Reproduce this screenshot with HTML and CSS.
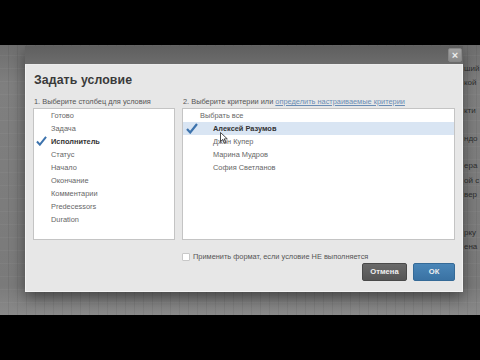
FILE: index.html
```html
<!DOCTYPE html>
<html lang="ru">
<head>
<meta charset="utf-8">
<title>Задать условие</title>
<link rel="stylesheet" href="styles.css">
</head>
<body>
<div class="screen">
  <div class="letterbox"></div>
  <div class="stage">
    <div class="page">
      <div class="prow r1"><span>ший</span></div>
      <div class="prow r2"><span>кой</span></div>
      <div class="prow r3"><span>кти</span></div>
      <div class="prow r4"><span>ндо</span></div>
      <div class="prow r5"><span>ера</span></div>
      <div class="prow r6"><span>ой с</span></div>
      <div class="prow r7"><span>вер</span></div>
      <div class="prow r8"><span>рку</span></div>
      <div class="prow r9"><span>ена</span></div>
    </div>
    <div class="dialog">
      <div class="dlg-head">
        <button class="close" type="button">×</button>
      </div>
      <div class="dlg-body">
        <h1 class="title">Задать условие</h1>
        <div class="cols">
          <div class="col col-left">
            <div class="label">1. Выберите столбец для условия</div>
            <ul class="list">
              <li class="item">Готово</li>
              <li class="item">Задача</li>
              <li class="item selected"><svg class="check" viewBox="0 0 12 11"><path d="M1 6 L4.2 9.5 L11 1" fill="none" stroke="#3d73ad" stroke-width="2.2"/></svg>Исполнитель</li>
              <li class="item">Статус</li>
              <li class="item">Начало</li>
              <li class="item">Окончание</li>
              <li class="item">Комментарии</li>
              <li class="item">Predecessors</li>
              <li class="item">Duration</li>
            </ul>
          </div>
          <div class="col col-right">
            <div class="label">2. Выберите критерии или <a class="link" href="#">определить настраиваемые критерии</a></div>
            <ul class="list list-right">
              <li class="item all">Выбрать все</li>
              <li class="item selected hl"><svg class="check" viewBox="0 0 12 11"><path d="M1 6 L4.2 9.5 L11 1" fill="none" stroke="#3d73ad" stroke-width="2.2"/></svg>Алексей Разумов</li>
              <li class="item">Джон Купер</li>
              <li class="item">Марина Мудров</li>
              <li class="item">София Светланов</li>
            </ul>
            <label class="neg"><span class="box"></span>Применить формат, если условие НЕ выполняется</label>
          </div>
        </div>
        <div class="actions">
          <button class="btn cancel" type="button">Отмена</button>
          <button class="btn ok" type="button">ОК</button>
        </div>
      </div>
    </div>
    <svg class="cursor" viewBox="0 0 8 12"><path d="M0.5 0.5 L0.5 9.5 L2.8 7.4 L4.4 11 L5.8 10.4 L4.2 6.9 L7.3 6.9 Z" fill="#fff" stroke="#222" stroke-width="0.8"/></svg>
  </div>
  <div class="letterbox"></div>
</div>
</body>
</html>
```

FILE: styles.css
```css
* { box-sizing: border-box; }
html, body { margin: 0; padding: 0; background: #000; }
body { font-family: "Liberation Sans", Arial, sans-serif; }

.screen { width: 480px; height: 360px; display: flex; flex-direction: column; overflow: hidden; }
.letterbox { height: 45px; background: #000; flex: none; }
.stage {
  position: relative;
  height: 270px;
  flex: none;
  background-color: #7c7c7c;
  background-image:
    repeating-linear-gradient(90deg, transparent 0 8px, rgba(0,0,0,0.06) 8px 9px),
    repeating-linear-gradient(0deg, transparent 0 12px, rgba(255,255,255,0.04) 12px 13px),
    linear-gradient(180deg, #6e6e6e 0, #7f7f7f 40px, #7a7a7a 240px, #8a8a8a 270px);
  overflow: hidden;
}

.page { display: flex; flex-direction: column; padding-top: 17px; }
.prow { height: 14px; display: flex; justify-content: flex-end; font-size: 8px; line-height: 14px; color: #2e2e2e; }
.prow span { width: 16px; white-space: nowrap; }
.r2 { margin-bottom: 14px; }
.r3 { margin-bottom: 14px; }
.r4 { margin-bottom: 13px; }
.r5 { margin-bottom: 1px; }
.r7 { margin-bottom: 24px; }

.dialog {
  position: absolute;
  left: 25px;
  top: 1px;
  width: 438px;
  display: flex;
  flex-direction: column;
  box-shadow: 0 6px 14px rgba(0,0,0,0.45);
}
.dlg-head {
  height: 18px;
  background: linear-gradient(180deg, #5f5f5f, #6c6c6c);
  display: flex;
  justify-content: flex-end;
  align-items: flex-start;
  padding: 2px 1px 0 0;
}
.close {
  width: 14px; height: 14px;
  margin: 0; padding: 0;
  border: 1px solid #878787;
  border-radius: 2px;
  background: linear-gradient(180deg, #a2a2a2, #8a8a8a);
  color: #ececec;
  font: bold 11px/12px "Liberation Sans", Arial, sans-serif;
  text-align: center;
}
.dlg-body {
  height: 228px;
  background: #e7e7e7;
  border: 1px solid #f3f3f3;
  border-top-color: #ececec;
  padding: 7px 7px 0 7px;
  display: flex;
  flex-direction: column;
}
.title {
  margin: 0 0 0 1px;
  font-size: 12.3px;
  line-height: 16px;
  font-weight: bold;
  color: #3a3a3a;
  letter-spacing: 0.1px;
}
.cols { display: flex; gap: 7px; margin-top: 9px; }
.col { display: flex; flex-direction: column; }
.col-left { width: 142px; }
.col-right { flex: 1; }
.label { font-size: 7.4px; line-height: 10px; color: #555; white-space: nowrap; padding-left: 1px; height: 11px; }
.link { color: #6a8db5; text-decoration: underline; }
.list {
  list-style: none;
  margin: 0;
  padding: 0;
  height: 132px;
  background: #fff;
  border: 1px solid #c4c4c4;
}
.item {
  position: relative;
  height: 13px;
  line-height: 13px;
  font-size: 7.4px;
  color: #666;
  padding-left: 17px;
  white-space: nowrap;
}
.item.selected { font-weight: bold; color: #333; }
.check { position: absolute; left: 2px; top: 1px; width: 11px; height: 10px; }
.list-right .item { padding-left: 30px; }
.list-right .item.all { padding-left: 17px; }
.list-right .check { left: 3px; width: 12px; height: 11px; top: 1px; }
.hl { background: #d9e5f3; }
.neg {
  display: flex;
  align-items: center;
  gap: 3px;
  margin-top: 12px;
  font-size: 7.4px;
  line-height: 10px;
  color: #555;
  white-space: nowrap;
}
.box { width: 8px; height: 8px; background: #fff; border: 1px solid #c8c8c8; border-radius: 1px; }
.actions { display: flex; justify-content: flex-end; gap: 6px; margin-top: 1px; }
.btn {
  height: 18px;
  margin: 0; padding: 0;
  border-radius: 2px;
  font: bold 7.6px/16px "Liberation Sans", Arial, sans-serif;
  color: #f0f0f0;
  text-align: center;
}
.cancel { width: 45px; background: linear-gradient(180deg, #6a6a6a, #555); border: 1px solid #4a4a4a; }
.ok { width: 42px; background: linear-gradient(180deg, #4a86b8, #3a72a3); border: 1px solid #356a97; }

.cursor { position: absolute; left: 220px; top: 87px; width: 8px; height: 12px; }
```
